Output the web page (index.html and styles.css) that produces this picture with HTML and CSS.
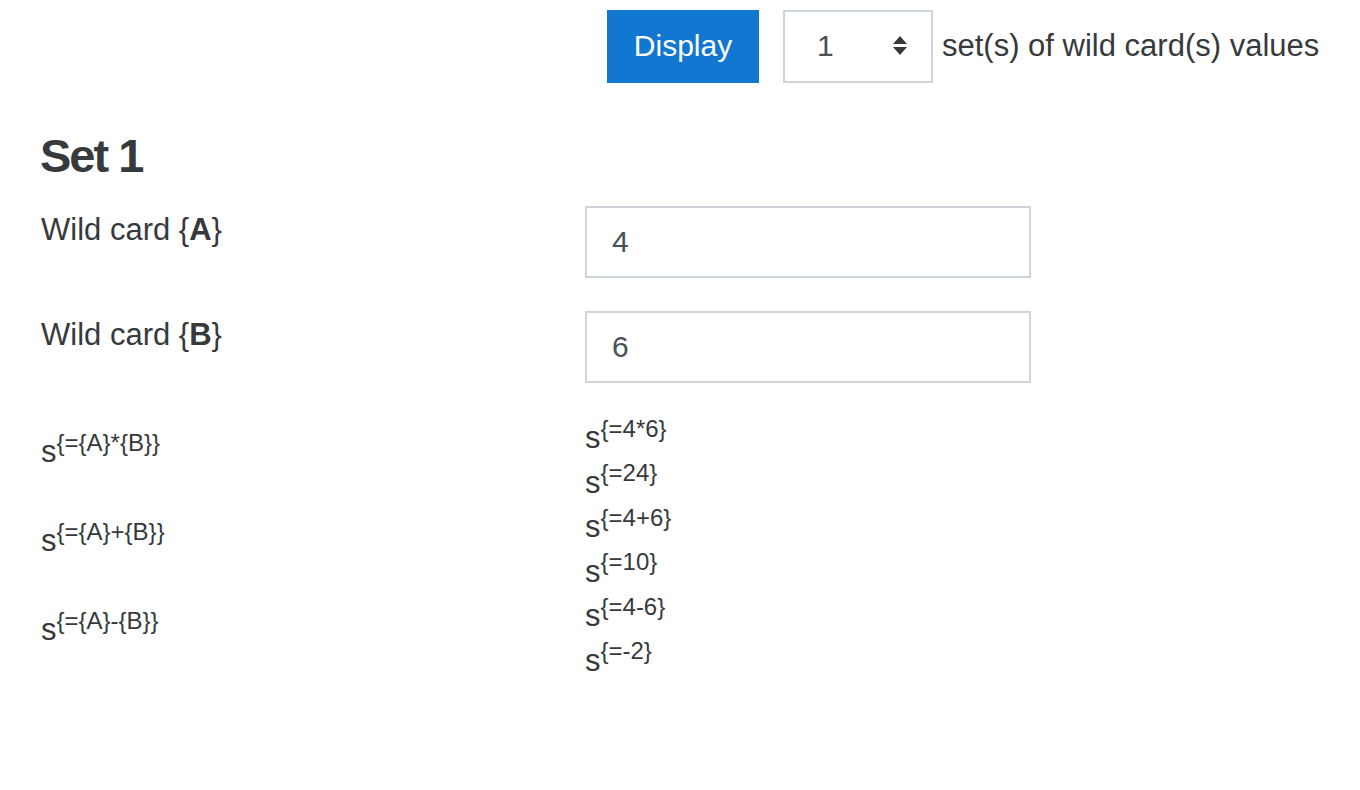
FILE: index.html
```html
<!DOCTYPE html>
<html>
  <head>
    <title>Wild card sets</title>
    <link rel="stylesheet" href="styles.css">
  </head>
  <body>
    <div class="page">
      <form class="display-row">
        <button type="button" class="btn-display">Display</button>
        <div class="select-box">
          <span class="select-value">1</span>
          <svg class="select-arrows" width="14" height="20" viewBox="0 0 14 20">
            <polygon points="7,0 14,8 0,8" fill="#373a3c"/>
            <polygon points="0,11 14,11 7,19" fill="#373a3c"/>
          </svg>
        </div>
        <span class="display-label">set(s) of wild card(s) values</span>
      </form>

      <h3 class="set-title">Set 1</h3>

      <div class="form-row">
        <label class="col-label">Wild card {<b>A</b>}</label>
        <div class="col-field"><input class="field" type="text" value="4"></div>
      </div>
      <div class="form-row">
        <label class="col-label">Wild card {<b>B</b>}</label>
        <div class="col-field"><input class="field" type="text" value="6"></div>
      </div>

      <div class="formula-row">
        <div class="col-label formula-label">s<sup>{={A}*{B}}</sup></div>
        <div class="col-field formula-values">
          <div>s<sup>{=4*6}</sup></div>
          <div>s<sup>{=24}</sup></div>
        </div>
      </div>
      <div class="formula-row">
        <div class="col-label formula-label">s<sup>{={A}+{B}}</sup></div>
        <div class="col-field formula-values">
          <div>s<sup>{=4+6}</sup></div>
          <div>s<sup>{=10}</sup></div>
        </div>
      </div>
      <div class="formula-row">
        <div class="col-label formula-label">s<sup>{={A}-{B}}</sup></div>
        <div class="col-field formula-values">
          <div>s<sup>{=4-6}</sup></div>
          <div>s<sup>{=-2}</sup></div>
        </div>
      </div>
    </div>
  </body>
</html>
```

FILE: styles.css
```css
body {
  margin: 0;
  background: #fff;
  color: #373a3c;
  font-family: "Liberation Sans", Arial, sans-serif;
  font-size: 31px;
  line-height: 44.5px;
}

.page {
  padding: 10px 40px 40px 41px;
}

.display-row {
  display: flex;
  align-items: center;
  padding-left: 566px;
  margin: 0;
}

.btn-display {
  background-color: #1177d1;
  color: #fff;
  border: none;
  border-radius: 0;
  font-family: inherit;
  font-size: 30px;
  line-height: 44.5px;
  width: 152px;
  height: 73px;
  padding: 0;
  margin-right: 24px;
}

.select-box {
  display: flex;
  align-items: center;
  justify-content: space-between;
  box-sizing: border-box;
  width: 150px;
  height: 73px;
  border: 2px solid #ced4da;
  padding: 0 24px 0 32px;
  color: #495057;
  font-size: 30px;
  margin-right: 9px;
}

.select-arrows {
  display: block;
  margin-top: -2px;
}

.display-label {
  white-space: nowrap;
}

.set-title {
  font-size: 47px;
  font-weight: bold;
  line-height: 1.2;
  letter-spacing: -2px;
  margin: 45px 0 22px -1px;
}

.form-row,
.formula-row {
  display: grid;
  grid-template-columns: 544px 446px;
}

.form-row {
  margin-bottom: 33px;
}

.col-label {
  padding-top: 2px;
}

.field {
  display: block;
  box-sizing: border-box;
  width: 446px;
  height: 72px;
  border: 2px solid #ced4da;
  padding: 0 25px;
  margin: 0;
  font-family: inherit;
  font-size: 30px;
  color: #495057;
  outline: none;
}

.formula-label {
  padding-top: 14px;
}

.formula-row sup {
  font-size: 24px;
  position: relative;
  top: -0.48em;
  vertical-align: baseline;
  line-height: 0;
}
```
